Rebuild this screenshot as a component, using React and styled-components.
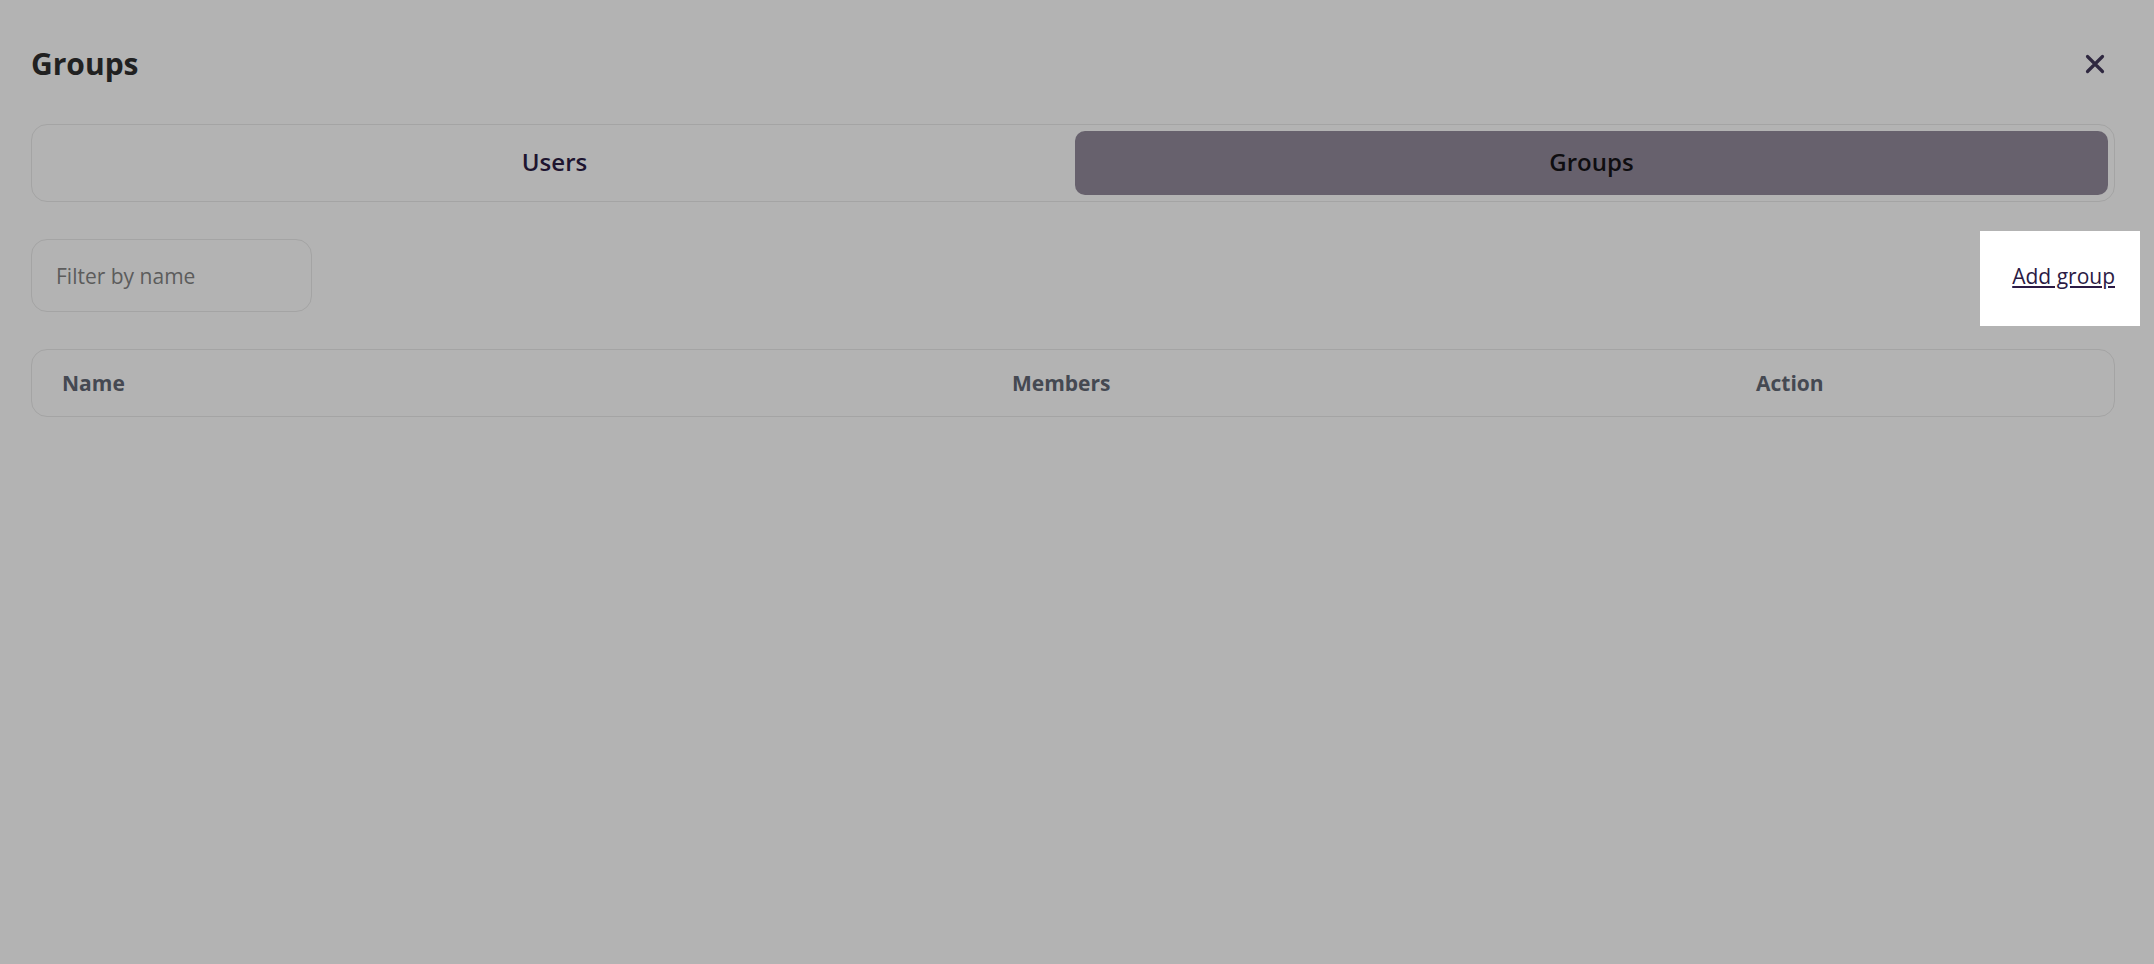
import React, { useState } from 'react';
import styled, { createGlobalStyle } from 'styled-components';

const GlobalStyle = createGlobalStyle`
  html, body {
    margin: 0;
    padding: 0;
    background: #b3b3b3;
    font-family: 'Open Sans', 'Noto Sans', sans-serif;
  }
  * {
    box-sizing: border-box;
  }
`;

const Page = styled.div`
  min-height: 964px;
  padding: 43px 39px 0 31px;
  display: flex;
  flex-direction: column;
`;

const Header = styled.div`
  display: flex;
  justify-content: space-between;
  align-items: center;
  height: 41px;
`;

const Title = styled.h1`
  margin: 0;
  font-size: 30px;
  font-weight: 700;
  line-height: 41px;
  color: #212121;
`;

const CloseButton = styled.button`
  width: 40px;
  height: 40px;
  padding: 0;
  border: none;
  background: transparent;
  display: flex;
  align-items: center;
  justify-content: center;
  color: #2f2840;
  cursor: pointer;
`;

const Tabs = styled.div`
  margin-top: 40px;
  height: 78px;
  border: 1px solid #a4a4a4;
  border-radius: 16px;
  padding: 6px;
  display: grid;
  grid-template-columns: 1fr 1fr;
  gap: 4px;
`;

const Tab = styled.button`
  border: none;
  border-radius: 10px;
  padding: 0 0 3px;
  background: ${({ active }) => (active ? '#67616d' : 'transparent')};
  color: ${({ active }) => (active ? '#0e0d10' : '#1e1530')};
  font-family: inherit;
  font-size: 24px;
  font-weight: 600;
  cursor: pointer;
`;

const Toolbar = styled.div`
  margin-top: 37px;
  display: flex;
  justify-content: space-between;
  align-items: center;
`;

const FilterInput = styled.input`
  width: 281px;
  height: 73px;
  border: 1px solid #a4a4a4;
  border-radius: 16px;
  background: transparent;
  padding: 0 24px;
  font-family: inherit;
  font-size: 21px;
  color: #222;
  outline: none;
  &::placeholder {
    color: #5c5c5c;
  }
`;

const AddButton = styled.button`
  position: relative;
  z-index: 0;
  border: none;
  background: none;
  padding: 0;
  font-family: inherit;
  font-size: 21px;
  color: #2b1a44;
  text-decoration: underline;
  cursor: pointer;

  /* tour spotlight around the button */
  &::before {
    content: '';
    position: absolute;
    inset: -31px -25px -36px -32px;
    background: #ffffff;
    z-index: -1;
  }
`;

const TableHead = styled.div`
  margin-top: 37px;
  height: 68px;
  border: 1px solid #a4a4a4;
  border-radius: 16px;
  padding: 0 30px;
  display: grid;
  grid-template-columns: 950px 744px 1fr;
  align-items: center;
`;

const HeadCell = styled.div`
  font-size: 21px;
  font-weight: 700;
  color: #454952;
`;

const CloseIcon = () => (
  <svg width="20" height="20" viewBox="0 0 20 20" fill="none">
    <path d="M2.5 2.5 L17.5 17.5 M17.5 2.5 L2.5 17.5" stroke="currentColor" strokeWidth="3.2" strokeLinecap="round" />
  </svg>
);

const App = () => {
  const [tab, setTab] = useState('groups');
  const [filter, setFilter] = useState('');

  return (
    <>
      <GlobalStyle />
      <Page>
        <Header>
          <Title>Groups</Title>
          <CloseButton aria-label="Close">
            <CloseIcon />
          </CloseButton>
        </Header>

        <Tabs>
          <Tab active={tab === 'users'} onClick={() => setTab('users')}>Users</Tab>
          <Tab active={tab === 'groups'} onClick={() => setTab('groups')}>Groups</Tab>
        </Tabs>

        <Toolbar>
          <FilterInput
            placeholder="Filter by name"
            value={filter}
            onChange={e => setFilter(e.target.value)}
          />
          <AddButton>Add group</AddButton>
        </Toolbar>

        <TableHead>
          <HeadCell>Name</HeadCell>
          <HeadCell>Members</HeadCell>
          <HeadCell>Action</HeadCell>
        </TableHead>
      </Page>
    </>
  );
};

export default App;
